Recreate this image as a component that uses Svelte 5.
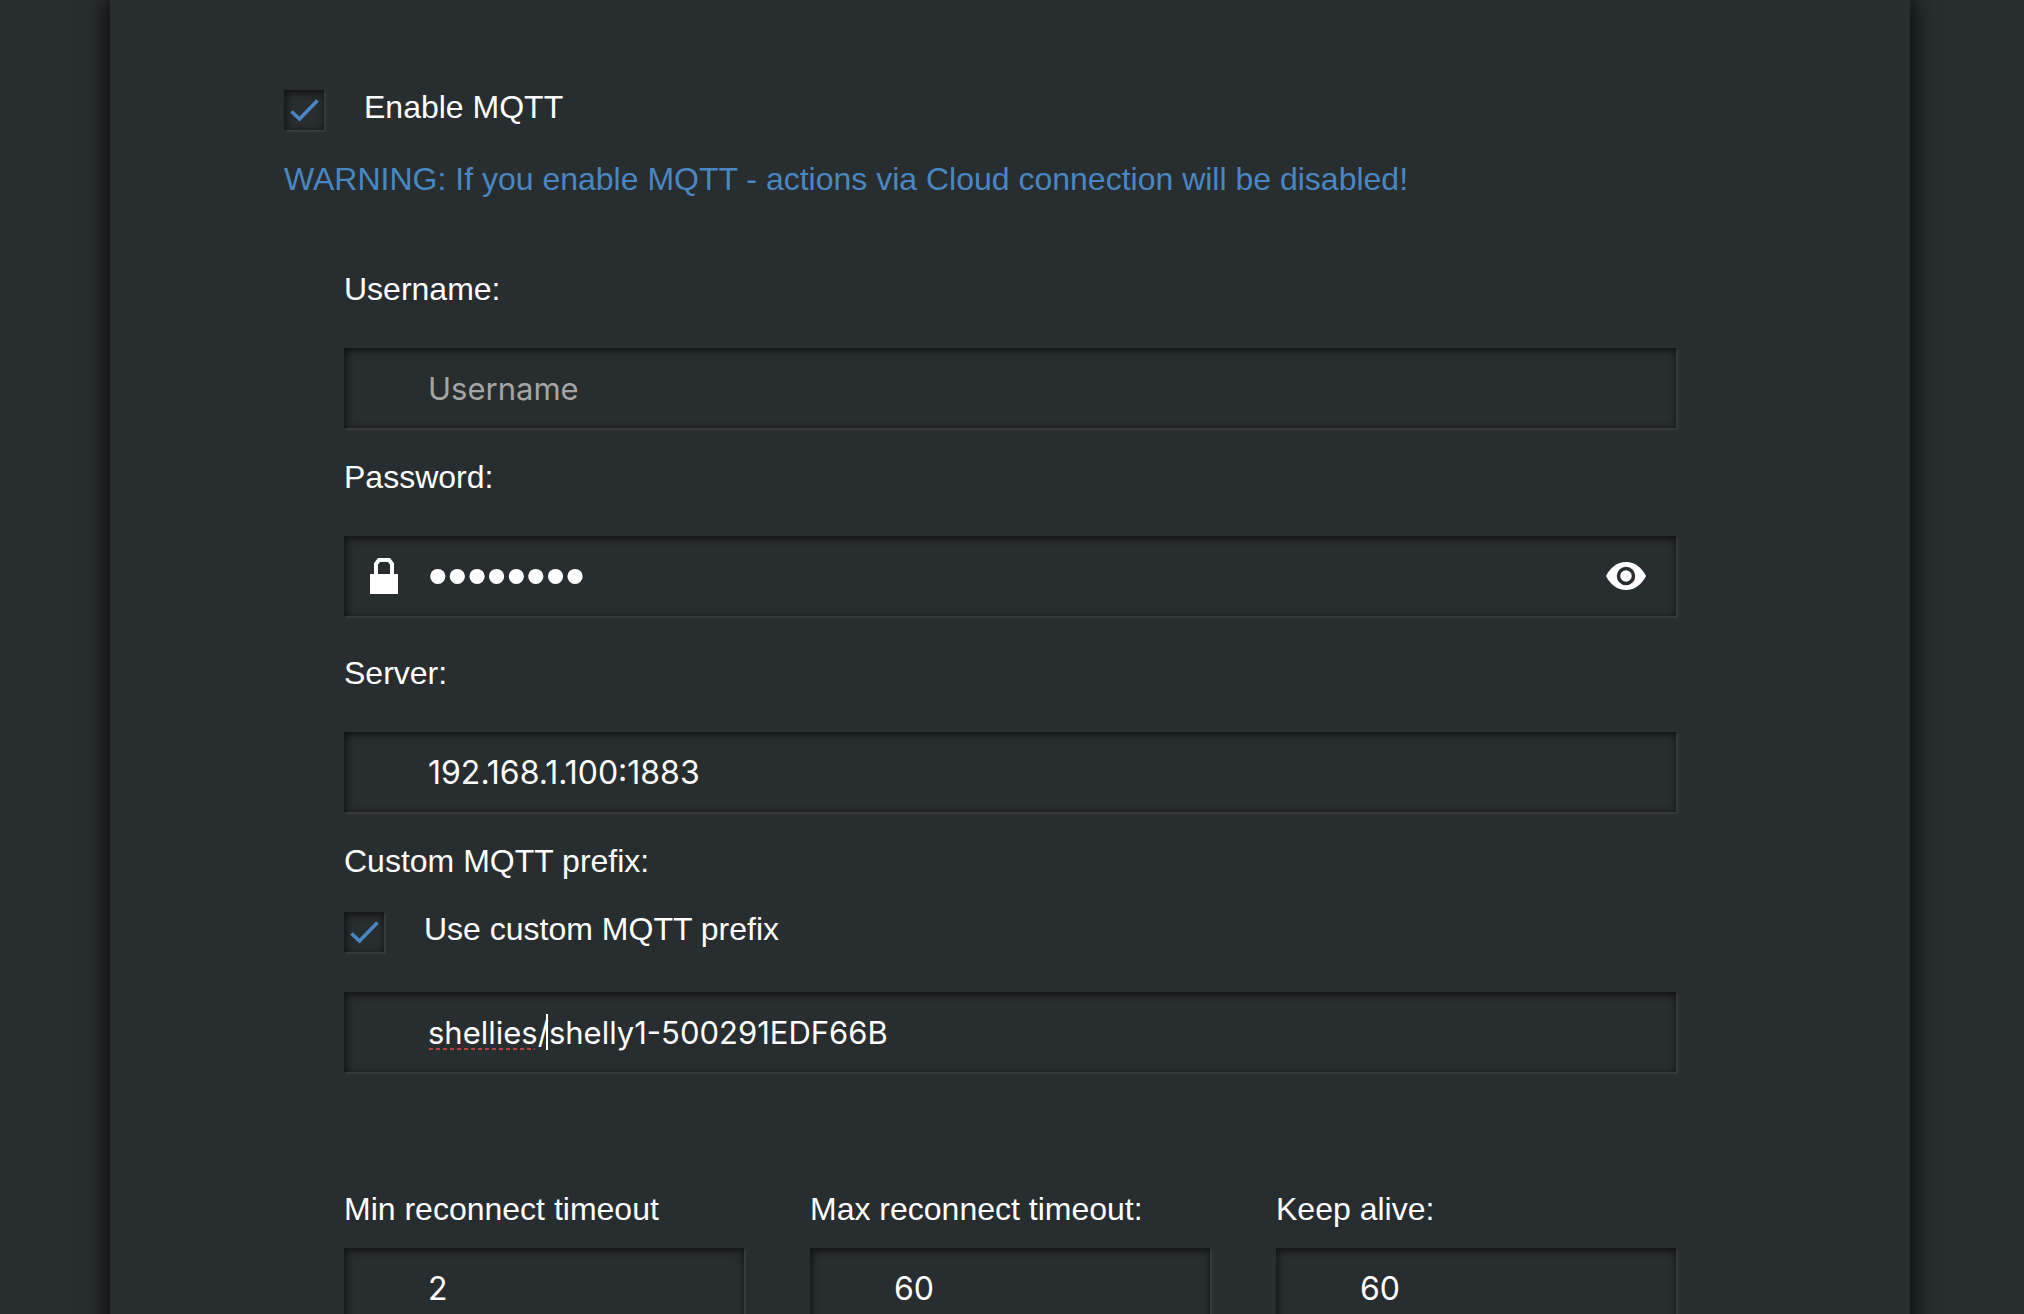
<script>
  let enabled = $state(true);
  let customPrefix = $state(true);
  let showPassword = $state(false);
  let username = $state('');
  let password = $state('password');
  let server = $state('192.168.1.100:1883');
  let prefix = $state('shellies/shelly1-500291EDF66B');

  const timeouts = [
    { id: 'min', label: 'Min reconnect timeout', value: '2' },
    { id: 'max', label: 'Max reconnect timeout:', value: '60' },
    { id: 'keep', label: 'Keep alive:', value: '60' }
  ];
</script>

{#snippet tick()}
  <svg class="tick" viewBox="0 0 40 40" aria-hidden="true">
    <path d="M7.5 21.5 L15.5 29 L33.5 10.5" />
  </svg>
{/snippet}

<div class="page">
  <main class="panel">
    <label class="check">
      <span class="box">
        <input type="checkbox" bind:checked={enabled} />
        {#if enabled}{@render tick()}{/if}
      </span>
      <span>Enable MQTT</span>
    </label>
    <p class="warning">WARNING: If you enable MQTT - actions via Cloud connection will be disabled!</p>

    <form class="fields">
      <div class="group">
        <label for="username">Username:</label>
        <input id="username" class="text" type="text" placeholder="Username" bind:value={username} />
      </div>

      <div class="group">
        <label for="password">Password:</label>
        <div class="control">
          <svg class="lock" viewBox="0 0 28 36" aria-hidden="true">
            <path d="M6 18 V6 L9 2 H19 L22 6 V18" fill="none" stroke="#fff" stroke-width="4" />
            <rect y="16" width="28" height="20" fill="#fff" />
          </svg>
          <input
            id="password"
            class="text"
            class:secret={!showPassword}
            type={showPassword ? 'text' : 'password'}
            autocomplete="off"
            bind:value={password}
          />
          <button class="eye" type="button" aria-label="Show password" onclick={() => (showPassword = !showPassword)}>
            <svg viewBox="0 0 40 28" aria-hidden="true">
              <path d="M0 14 C4 6 11 0 20 0 S36 6 40 14 C36 22 29 28 20 28 S4 22 0 14Z" fill="#fff" />
              <circle cx="20" cy="14" r="7.5" fill="none" stroke="#282d2f" stroke-width="3.5" />
            </svg>
          </button>
        </div>
      </div>

      <div class="group server">
        <label for="server">Server:</label>
        <input id="server" class="text numeric" type="text" bind:value={server} />
      </div>

      <div class="group prefix">
        <label for="prefix">Custom MQTT prefix:</label>
        <label class="check">
          <span class="box">
            <input type="checkbox" bind:checked={customPrefix} />
            {#if customPrefix}{@render tick()}{/if}
          </span>
          <span>Use custom MQTT prefix</span>
        </label>
        <div class="control">
          <input id="prefix" class="text" type="text" spellcheck="false" bind:value={prefix} />
          <span class="misspelt"></span>
          <span class="caret"></span>
        </div>
      </div>

      <div class="timeouts">
        {#each timeouts as item (item.id)}
          <div class="group small">
            <label for={item.id}>{item.label}</label>
            <input id={item.id} class="text numeric" type="text" inputmode="numeric" value={item.value} />
          </div>
        {/each}
      </div>
    </form>
  </main>
</div>

<style>
  :global(body) {
    margin: 0;
    background: #282d2f;
  }

  .page {
    height: 100vh;
    overflow: hidden;
    display: flex;
    color: #fff;
    font: 32px/40px 'Liberation Sans', Arial, sans-serif;
  }

  .panel {
    flex: 1;
    box-sizing: border-box;
    height: max-content;
    min-height: 100vh;
    margin: 0 114px 0 110px;
    padding: 87px 174px;
    background: #282d2f;
    box-shadow: 0 0 24px 2px rgba(0, 0, 0, 0.85);
  }

  .check {
    display: flex;
    align-items: flex-start;
    gap: 40px;
  }

  .box {
    position: relative;
    width: 40px;
    height: 40px;
    margin-top: 3px;
  }

  .box input {
    appearance: none;
    display: block;
    width: 40px;
    height: 40px;
    margin: 0;
    background: #282d2f;
    box-shadow:
      inset 1px 2px 8px rgba(0, 0, 0, 0.7),
      2px 2px 2px rgba(255, 255, 255, 0.08);
  }

  .tick {
    position: absolute;
    inset: 0;
    pointer-events: none;
  }

  .tick path {
    fill: none;
    stroke: #4a87c2;
    stroke-width: 3.5;
  }

  .warning {
    margin: 29px 0 70px;
    color: #4a87c2;
  }

  .fields {
    display: flex;
    flex-direction: column;
    gap: 29px;
    padding: 0 60px;
  }

  .group {
    display: flex;
    flex-direction: column;
    gap: 39px;
    min-width: 0;
  }

  .server {
    margin-top: 8px;
  }

  .prefix {
    gap: 28px;
  }

  .prefix .control {
    margin-top: 12px;
  }

  .small {
    gap: 19px;
  }

  .timeouts {
    display: grid;
    grid-template-columns: repeat(3, 1fr);
    gap: 66px;
    margin-top: 88px;
  }

  .control {
    position: relative;
  }

  .text {
    display: block;
    box-sizing: border-box;
    width: 100%;
    height: 80px;
    padding: 0 84px;
    border: 0;
    outline: 0;
    background: #282d2f;
    color: #fff;
    font: 31px/40px Inter, sans-serif;
    box-shadow:
      inset 1px 2px 8px rgba(0, 0, 0, 0.7),
      2px 2px 2px rgba(255, 255, 255, 0.08);
  }

  .numeric {
    font-size: 32px;
  }

  .secret {
    font: 56px/80px 'Liberation Sans', Arial, sans-serif;
  }

  .text::placeholder {
    color: #a5a5a5;
    opacity: 1;
  }

  .lock {
    position: absolute;
    left: 26px;
    top: 22px;
    width: 28px;
    height: 36px;
  }

  .eye {
    position: absolute;
    right: 30px;
    top: 26px;
    width: 40px;
    height: 28px;
    padding: 0;
    border: 0;
    background: none;
    cursor: pointer;
  }

  .eye svg {
    display: block;
  }

  .misspelt {
    position: absolute;
    left: 85px;
    top: 56px;
    width: 106px;
    height: 2px;
    background: repeating-linear-gradient(90deg, #b8443f 0 4px, transparent 4px 7px);
  }

  .caret {
    position: absolute;
    left: 202px;
    top: 22px;
    width: 2px;
    height: 36px;
    background: #fff;
  }
</style>
